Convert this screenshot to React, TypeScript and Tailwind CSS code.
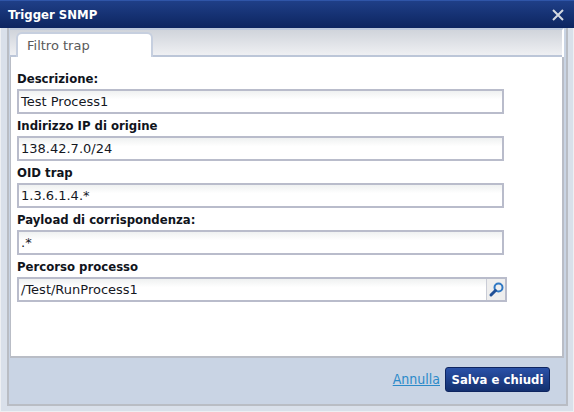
const fields = [
  { label: 'Descrizione:', value: 'Test Process1' },
  { label: 'Indirizzo IP di origine', value: '138.42.7.0/24' },
  { label: 'OID trap', value: '1.3.6.1.4.*' },
  { label: 'Payload di corrispondenza:', value: '.*' },
]

const labelClass = "h-[17px] font-['DejaVu_Sans_Condensed','DejaVu_Sans',sans-serif] text-[13px] leading-[17px] font-bold text-[#10141c]"
const inputClass = 'mt-[2px] h-[25px] border-2 border-[#b9bccb] bg-gradient-to-b from-[#eff1f1] to-white to-40% text-[13px] leading-[21px] text-[#15181f]'

function Field({ label, value }: { label: string; value: string }) {
  return (
    <div>
      <div className={labelClass}>{label}</div>
      <div className={`${inputClass} w-[487px] px-[2px]`}>{value}</div>
    </div>
  )
}

export default function App() {
  return (
    <div className="flex h-[412px] w-[574px] flex-col bg-[#d9e0ea] font-['DejaVu_Sans',sans-serif]">
      <div className="flex h-[28px] shrink-0 items-center justify-between border-t border-[#2f55a8] bg-gradient-to-b from-[#1f3f88] to-[#0d2560] pl-[8px] pr-[9px]">
        <span className="font-['DejaVu_Sans_Condensed','DejaVu_Sans',sans-serif] text-[13px] font-bold text-white">Trigger SNMP</span>
        <svg width="14" height="14" viewBox="0 0 14 14" className="text-[#d5d9e0]">
          <path d="M2 2 L12 12 M12 2 L2 12" stroke="currentColor" strokeWidth="2" />
        </svg>
      </div>
      <div className="flex flex-1 flex-col border-x border-b border-x-[#eef0f3] border-b-[#eef0f3] pb-[5px] pl-[6px] pr-[5px]">
        <div className="flex flex-1 flex-col border-2 border-t-0 border-[#b9bdc4] bg-[#c9d4e4]">
          <div className="mr-[2px] ml-[1px] flex h-[29px] shrink-0 border-t-2 border-r-2 border-t-[#bcc8dc] border-r-white">
            <div className="flex flex-1 items-end border-b-2 border-[#bcc6d8] bg-gradient-to-b from-[#d0d4db] to-[#eff0f3] pl-[6px]">
              <div className="-mb-[2px] flex h-[25px] w-[137px] items-center rounded-t-[6px] border-2 border-b-0 border-[#c6cfdf] bg-white pl-[9px] text-[13px] text-[#5a5a5a]">
                Filtro trap
              </div>
            </div>
          </div>
          <div className="mr-[2px] ml-[1px] flex h-[301px] shrink-0 flex-col border-b-2 border-l border-r-2 border-[#b9bdc6] bg-white pl-[6px] pt-[13px]">
            <div className="flex flex-col gap-[3px]">
              {fields.map((f) => (
                <Field key={f.label} label={f.label} value={f.value} />
              ))}
              <div>
                <div className={labelClass}>Percorso processo</div>
                <div className={`${inputClass} flex w-[490px]`}>
                  <span className="flex-1 px-[2px]">/Test/RunProcess1</span>
                  <span className="flex w-[19px] items-center justify-center border-l border-[#c9ccd6] bg-[#eeeeee]">
                    <svg width="17" height="17" viewBox="0 0 17 17" fill="none">
                      <circle cx="10.5" cy="6.5" r="4" stroke="#2f78c4" strokeWidth="2" />
                      <path d="M7.5 9.5 L3 14" stroke="#1f4f96" strokeWidth="3" strokeLinecap="round" />
                    </svg>
                  </span>
                </div>
              </div>
            </div>
          </div>
          <div className="flex flex-1 items-start justify-end gap-[5px] pr-[16px] pt-[9px]">
            <a className="font-['DejaVu_Sans_Condensed','DejaVu_Sans',sans-serif] text-[14px] leading-[25px] text-[#2b8ac9] underline">Annulla</a>
            <button className="h-[25px] w-[105px] rounded-[3px] border border-[#0e2560] bg-gradient-to-b from-[#2a51a8] to-[#13306f] font-['DejaVu_Sans_Condensed','DejaVu_Sans',sans-serif] text-[13px] font-bold text-white">
              Salva e chiudi
            </button>
          </div>
        </div>
      </div>
    </div>
  )
}
